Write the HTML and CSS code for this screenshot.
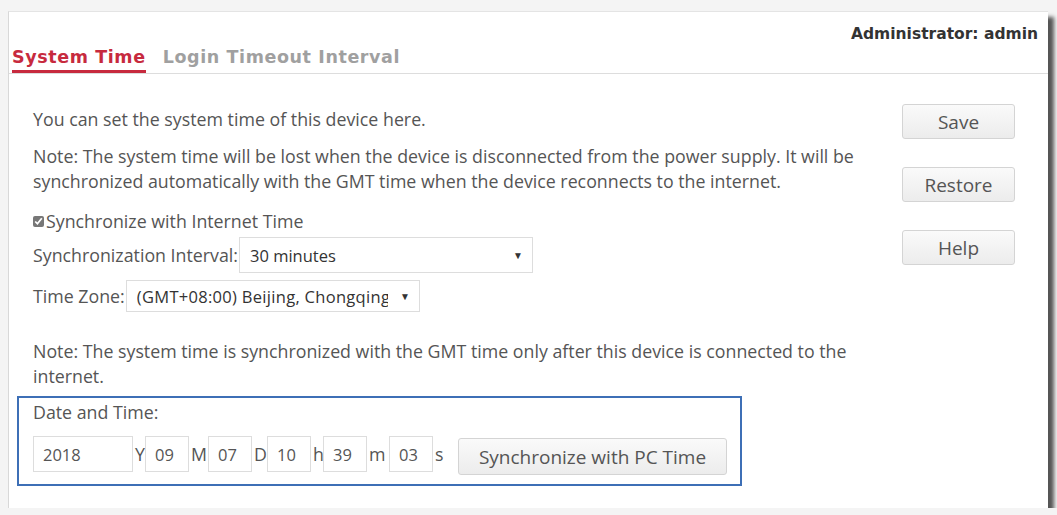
FILE: index.html
```html
<!DOCTYPE html>
<html lang="en">
<head>
  <meta charset="UTF-8">
  <title>System Time</title>
  <link rel="stylesheet" href="styles.css">
</head>
<body>
  <div class="frame">
    <div class="user">Administrator: admin</div>
    <div class="tabs">
      <span class="tab active">System Time</span>
      <span class="tab">Login Timeout Interval</span>
    </div>

    <div class="content">
      <div class="main">
        <p class="intro">You can set the system time of this device here.</p>
        <p class="note1">Note: The system time will be lost when the device is disconnected from the power supply. It will be<br>synchronized automatically with the GMT time when the device reconnects to the internet.</p>

        <label class="check"><input type="checkbox" checked>Synchronize with Internet Time</label>

        <div class="row interval">
          <span>Synchronization Interval:</span>
          <div class="select wide"><span class="val">30 minutes</span><span class="arrow">&#9660;</span></div>
        </div>

        <div class="row zone">
          <span>Time Zone:</span>
          <div class="select"><span class="val">(GMT+08:00) Beijing, Chongqing</span><span class="arrow">&#9660;</span></div>
        </div>

        <p class="note2">Note: The system time is synchronized with the GMT time only after this device is connected to the<br>internet.</p>

        <div class="datetime">
          <div class="dt-label">Date and Time:</div>
          <div class="dt-row">
            <input class="year" type="text" value="2018"><span class="unit u-y">Y</span>
            <input type="text" value="09"><span class="unit u-m">M</span>
            <input type="text" value="07"><span class="unit u-d">D</span>
            <input type="text" value="10"><span class="unit u-h">h</span>
            <input type="text" value="39"><span class="unit u-mi">m</span>
            <input type="text" value="03"><span class="unit u-s">s</span>
            <button class="btn pc">Synchronize with PC Time</button>
          </div>
        </div>
      </div>

      <div class="side">
        <button class="btn">Save</button>
        <button class="btn">Restore</button>
        <button class="btn">Help</button>
      </div>
    </div>
  </div>
</body>
</html>
```

FILE: styles.css
```css
body { margin: 0; background: #f4f4f4; font-family: "Open Sans", sans-serif; color: #555; }
.frame { margin: 11px 0 0 8px; width: 1040px; height: 497px; background: #fff; border-left: 1px solid #d8d8d8; border-top: 1px solid #e4e4e4; box-sizing: border-box; box-shadow: 6px 6px 4px #555; }

.user { text-align: right; padding: 13px 10px 0 0; line-height: 18px; font-family: "DejaVu Sans", sans-serif; font-weight: bold; font-size: 15.5px; color: #333; }
.tabs { border-bottom: 1px solid #ddd; padding-left: 3px; height: 30px; display: flex; align-items: flex-end; }
.tab { font-family: "DejaVu Sans", sans-serif; font-weight: bold; font-size: 17.5px; color: #a0a0a0; letter-spacing: 0.6px; padding-bottom: 2px; margin-right: 17px; border-bottom: 3px solid transparent; line-height: 22px; }
.tab.active { color: #c72a3e; border-bottom-color: #c72a3e; }

.content { display: flex; justify-content: space-between; }
.main { padding-left: 24px; width: 900px; }
p { margin: 0; }
.main, .side { font-size: 17.8px; line-height: 25px; }
.intro { margin-top: 33px; }
.note1 { margin-top: 12px; }
.check { display: flex; align-items: center; margin-top: 15px; }
.check input { margin: 0 2px 0 0; width: 11px; height: 11px; accent-color: #777; }

.row { display: flex; align-items: center; }
.interval { margin-top: 3px; }
.zone { margin-top: 7px; }
.select { display: flex; align-items: center; border: 1px solid #ddd; box-sizing: border-box; font-size: 16.5px; color: #333; padding: 0 9px 0 10px; width: 294px; height: 32px; white-space: nowrap; margin-left: 1px; }
.select.wide { height: 36px; }
.val { flex: 1; overflow: hidden; }
.arrow { font-size: 10px; color: #333; margin-left: 6px; }
.zone .val { letter-spacing: 0.3px; }
.zone .arrow { margin-left: 12px; }

.note2 { margin-top: 27px; }

.datetime { margin: 7px 0 0 -16px; width: 725px; height: 90px; border: 2px solid #3d6fb6; box-sizing: border-box; padding: 2px 0 0 14px; }
.dt-row { display: flex; align-items: flex-start; margin-top: 11px; }
.dt-row input { width: 44px; height: 36px; box-sizing: border-box; border: 1px solid #ddd; font-family: "Open Sans", sans-serif; font-size: 16.5px; color: #555; padding: 0 9px; margin: 0; outline: none; }
.dt-row input.year { width: 100px; }
.unit { padding-left: 2px; line-height: 36px; }
.u-y { width: 10px; }
.u-m { width: 17px; }
.u-d { width: 13px; }
.u-h { width: 10px; }
.u-mi { width: 20px; }
.u-s { width: 23px; }

.btn { font-family: "Open Sans", sans-serif; font-size: 19px; color: #555; background: linear-gradient(#fafafa, #ececec); border: 1px solid #d4d4d4; border-radius: 3px; height: 35px; padding: 0; }
.btn.pc { width: 269px; height: 37px; margin-top: 2px; }
.side { display: flex; flex-direction: column; gap: 28px; padding: 30px 33px 0 0; }
.side .btn { width: 113px; }
```
